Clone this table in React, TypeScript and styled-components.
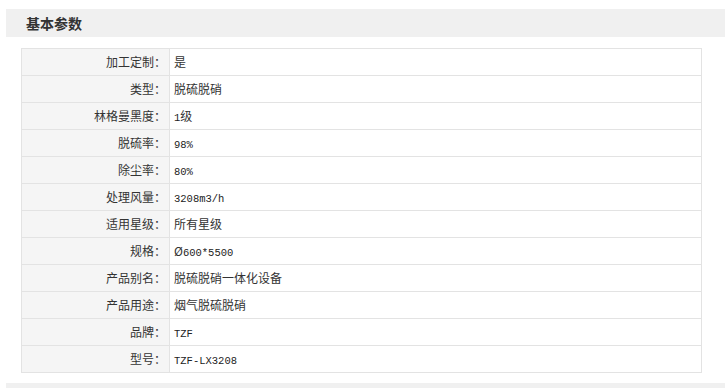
import React from "react";
import styled, { createGlobalStyle } from "styled-components";

const Global = createGlobalStyle`
  html, body { margin: 0; padding: 0; background: #fff; }
  body { font-family: "Noto Sans CJK SC", "Liberation Sans", sans-serif; color: #333; }
`;

const Page = styled.div`
  padding: 9px 0 0 6px;
`;

const SectionBar = styled.div`
  height: 28px;
  background: #f0f0f0;
  display: flex;
  align-items: center;
  padding-left: 20px;
`;

const Title = styled.h2`
  margin: 0;
  font-size: 14px;
  font-weight: bold;
  color: #333;
  line-height: 28px;
`;

const Table = styled.div`
  margin: 11px 0 10px 15px;
  width: 680px;
  display: grid;
  grid-template-columns: 148px 1fr;
  border-top: 1px solid #e3e3e3;
  border-left: 1px solid #e3e3e3;
`;

const Cell = styled.div<{ $label?: boolean }>`
  height: 26px;
  line-height: 26px;
  border-right: 1px solid #e3e3e3;
  border-bottom: 1px solid #e3e3e3;
  background: ${(p) => (p.$label ? "#f5f5f5" : "#fff")};
  text-align: ${(p) => (p.$label ? "right" : "left")};
  padding: ${(p) => (p.$label ? "0 3px 0 0" : "0 0 0 4px")};
  font-size: 12px;
  color: #333;
  white-space: nowrap;
  overflow: hidden;
`;

const Latin = styled.span`
  font-family: "Liberation Mono", monospace;
  font-size: 10.5px;
  line-height: 1;
  color: #222;
`;

const NextBar = styled.div`
  height: 5px;
  background: #f0f0f0;
`;

const rows: [string, string][] = [
  ["加工定制", "是"],
  ["类型", "脱硫脱硝"],
  ["林格曼黑度", "1级"],
  ["脱硫率", "98%"],
  ["除尘率", "80%"],
  ["处理风量", "3208m3/h"],
  ["适用星级", "所有星级"],
  ["规格", "Ø600*5500"],
  ["产品别名", "脱硫脱硝一体化设备"],
  ["产品用途", "烟气脱硫脱硝"],
  ["品牌", "TZF"],
  ["型号", "TZF-LX3208"],
];

function renderValue(v: string) {
  const parts = v.match(/[\x00-\x7f]+|[^\x00-\x7f]+/g) || [];
  return parts.map((p, i) =>
    /^[\x00-\x7f]+$/.test(p) ? <Latin key={i}>{p}</Latin> : <React.Fragment key={i}>{p}</React.Fragment>
  );
}

export default function App() {
  return (
    <Page>
      <Global />
      <SectionBar>
        <Title>基本参数</Title>
      </SectionBar>
      <Table>
        {rows.map(([k, v]) => (
          <React.Fragment key={k}>
            <Cell $label>{k}：</Cell>
            <Cell>{renderValue(v)}</Cell>
          </React.Fragment>
        ))}
      </Table>
      <NextBar />
    </Page>
  );
}
